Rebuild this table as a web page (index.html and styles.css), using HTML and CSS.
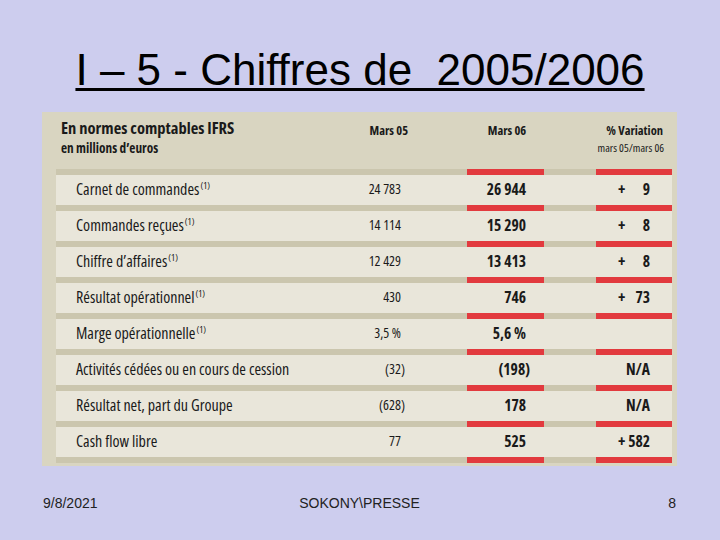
FILE: index.html
```html
<!DOCTYPE html>
<html lang="fr">
<head>
<meta charset="utf-8">
<title>I – 5 - Chiffres de 2005/2006</title>
<link rel="stylesheet" href="styles.css">
</head>
<body>
<div class="slide">
  <h1 class="title">I – 5 - Chiffres de&nbsp; 2005/2006</h1>

  <div class="panel">
    <div class="head">
      <div class="h-label">
        <div class="h-main">En normes comptables IFRS</div>
        <div class="h-sub">en millions d’euros</div>
      </div>
      <div class="h-m05">Mars 05</div>
      <div class="h-m06">Mars 06</div>
      <div class="h-var">
        <div class="h-var-main">% Variation</div>
        <div class="h-var-sub">mars 05/mars 06</div>
      </div>
    </div>

    <div class="band"><span class="red c06"></span><span class="red cvar"></span></div>
    <div class="row">
      <div class="lbl">Carnet de commandes<sup>(1)</sup></div>
      <div class="v05">24 783</div>
      <div class="v06">26 944</div>
      <div class="vvar"><span>+</span><span>9</span></div>
    </div>

    <div class="band"><span class="red c06"></span><span class="red cvar"></span></div>
    <div class="row">
      <div class="lbl">Commandes reçues<sup>(1)</sup></div>
      <div class="v05">14 114</div>
      <div class="v06">15 290</div>
      <div class="vvar"><span>+</span><span>8</span></div>
    </div>

    <div class="band"><span class="red c06"></span><span class="red cvar"></span></div>
    <div class="row">
      <div class="lbl">Chiffre d’affaires<sup>(1)</sup></div>
      <div class="v05">12 429</div>
      <div class="v06">13 413</div>
      <div class="vvar"><span>+</span><span>8</span></div>
    </div>

    <div class="band"><span class="red c06"></span><span class="red cvar"></span></div>
    <div class="row">
      <div class="lbl">Résultat opérationnel<sup>(1)</sup></div>
      <div class="v05">430</div>
      <div class="v06">746</div>
      <div class="vvar"><span>+</span><span>73</span></div>
    </div>

    <div class="band"><span class="red c06"></span><span class="red cvar"></span></div>
    <div class="row">
      <div class="lbl">Marge opérationnelle<sup>(1)</sup></div>
      <div class="v05">3,5 %</div>
      <div class="v06">5,6 %</div>
      <div class="vvar"></div>
    </div>

    <div class="band"><span class="red c06"></span><span class="red cvar"></span></div>
    <div class="row">
      <div class="lbl">Activités cédées ou en cours de cession</div>
      <div class="v05 neg">(32)</div>
      <div class="v06 neg">(198)</div>
      <div class="vvar na">N/A</div>
    </div>

    <div class="band"><span class="red c06"></span><span class="red cvar"></span></div>
    <div class="row">
      <div class="lbl">Résultat net, part du Groupe</div>
      <div class="v05 neg">(628)</div>
      <div class="v06">178</div>
      <div class="vvar na">N/A</div>
    </div>

    <div class="band"><span class="red c06"></span><span class="red cvar"></span></div>
    <div class="row">
      <div class="lbl">Cash flow libre</div>
      <div class="v05">77</div>
      <div class="v06">525</div>
      <div class="vvar na">+ 582</div>
    </div>

    <div class="band"><span class="red c06"></span><span class="red cvar"></span></div>
  </div>

  <div class="footer">
    <div class="f-date">9/8/2021</div>
    <div class="f-center">SOKONY\PRESSE</div>
    <div class="f-num">8</div>
  </div>
</div>
</body>
</html>
```

FILE: styles.css
```css
html, body {
  margin: 0;
  padding: 0;
}

body {
  background: #cdcdee;
  font-family: "Liberation Sans", Arial, sans-serif;
  color: #000;
}

.slide {
  width: 720px;
  height: 540px;
  box-sizing: border-box;
  padding-top: 45px;
  display: flex;
  flex-direction: column;
}

.title {
  margin: 0;
  font-family: "Liberation Sans", Arial, sans-serif;
  font-weight: normal;
  font-size: 44px;
  line-height: 50px;
  height: 50px;
  text-align: center;
  text-decoration: underline;
  text-decoration-thickness: 3px;
  text-underline-offset: 3px;
  color: #000;
}

.panel {
  margin-top: 17px;
  margin-left: 42px;
  width: 635px;
  height: 354px;
  box-sizing: border-box;
  padding: 5px 5px 3px 14px;
  background: #d9d5c1;
  font-family: "Open Sans", "Noto Sans", sans-serif;
  font-stretch: 75%;
  color: #1a1a1a;
  white-space: nowrap;
}

.head,
.row,
.band {
  display: grid;
  grid-template-columns: 300px 53px 58px 77px 52px 76px;
}

.head {
  height: 52px;
  align-items: start;
}

.h-label {
  padding-left: 5px;
  font-weight: bold;
}

.h-main {
  font-size: 16.5px;
  line-height: 22px;
}

.h-sub {
  font-size: 13.3px;
  line-height: 18px;
}

.h-m05,
.h-m06,
.h-var-main {
  font-weight: bold;
  font-size: 12.5px;
  line-height: 15px;
  margin-top: 6px;
}

.h-m05 {
  grid-column: 2;
  text-align: right;
  padding-right: 1px;
}

.h-m06 {
  grid-column: 4;
  text-align: center;
  padding-left: 3px;
}

.h-var {
  grid-column: 6;
  text-align: right;
  padding-right: 9px;
}

.h-var-sub {
  margin-top: 3px;
  margin-right: -1px;
  font-size: 11.3px;
  line-height: 14px;
}

.band {
  height: 6px;
  background: #cbc6ae;
}

.red {
  background: #e23a3e;
}

.c06 {
  grid-column: 4;
}

.cvar {
  grid-column: 6;
}

.row {
  height: 30px;
  box-sizing: border-box;
  padding-top: 2px;
  line-height: 24px;
  background: #e9e6da;
}

.lbl {
  padding-left: 20px;
  font-size: 16px;
}

.lbl sup {
  font-size: 9.5px;
  line-height: 0;
  vertical-align: 6px;
  margin-left: 1px;
}

.v05 {
  grid-column: 2;
  text-align: right;
  padding-right: 8px;
  font-size: 14px;
}

.v06 {
  grid-column: 4;
  text-align: right;
  padding-right: 18px;
  font-size: 15.5px;
  font-weight: bold;
}

.neg {
  margin-right: -4px;
}

.vvar {
  grid-column: 6;
  display: flex;
  justify-content: space-between;
  padding: 0 22px;
  font-size: 15.5px;
  font-weight: bold;
}

.vvar.na {
  justify-content: flex-end;
}

.footer {
  margin-top: auto;
  padding: 0 44px 29px 43px;
  display: grid;
  grid-template-columns: 1fr auto 1fr;
  font-family: "Liberation Sans", Arial, sans-serif;
  font-size: 14px;
  line-height: 16px;
  color: #222;
}

.f-num {
  text-align: right;
}
```
